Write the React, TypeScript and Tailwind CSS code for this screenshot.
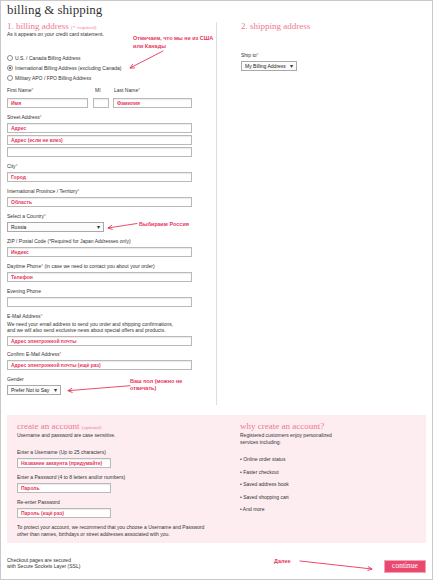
import React from 'react';

function Label({ children, req }: { children: React.ReactNode; req?: boolean }) {
  return (
    <div className="h-[7px] text-[5px] leading-[7px] text-[#333] whitespace-nowrap">
      {children}
      {req && <span className="text-[#e8708a]">*</span>}
    </div>
  );
}

function Input({ w, value }: { w: string; value?: string }) {
  return (
    <div className={`${w} h-[10px] border border-[#b9b9b9] bg-white pl-[3px] text-[5px] leading-[8px] font-bold text-[#e8365d] whitespace-nowrap overflow-hidden shadow-[inset_0_1px_1px_rgba(0,0,0,0.08)]`}>
      {value}
    </div>
  );
}

function Select({ w, value }: { w: string; value: string }) {
  return (
    <div className={`${w} h-[10px] border border-[#a9a9a9] bg-[#fbfbfb] flex items-center justify-between pl-[3px] pr-[3px] text-[5px] leading-[8px] text-[#222] whitespace-nowrap`}>
      <span>{value}</span>
      <span className="text-[6px] leading-[6px] text-[#333]">▾</span>
    </div>
  );
}

function Radio({ checked, children }: { checked?: boolean; children: React.ReactNode }) {
  return (
    <div className="h-[10px] flex items-center">
      <span className="w-[6px] h-[6px] rounded-full border border-[#8d8d8d] bg-white flex items-center justify-center">
        {checked && <span className="w-[2px] h-[2px] rounded-full bg-[#444]" />}
      </span>
      <span className="ml-[2px] text-[5px] leading-[7px] text-[#333]">{children}</span>
    </div>
  );
}

function Field({ label, req, value }: { label: string; req?: boolean; value?: string }) {
  return (
    <div className="mt-[6px]">
      <Label req={req}>{label}</Label>
      <div className="mt-[2px]">
        <Input w="w-[185px]" value={value} />
      </div>
    </div>
  );
}

export default function App() {
  return (
    <div className="relative w-[433px] h-[580px] border border-[#c9c9c9] bg-white overflow-hidden font-['Liberation_Sans',Arial,sans-serif] text-[#333]">
      <div className="h-[21px] pl-[6px] text-[13px] leading-[16px] pt-[1px] font-['Liberation_Serif',serif] text-[#333]">
        billing &amp; shipping
      </div>

      <div className="flex">
        {/* left column */}
        <div className="w-[216px] border-r border-[#dedede] pl-[6px] pb-[10px]">
          <div className="h-[9px] text-[9px] leading-[9px] font-['Liberation_Serif',serif] text-[#ee7890] whitespace-nowrap">
            1. billing address <span className="text-[5px]">(*=required)</span>
          </div>
          <div className="h-[7px] text-[5px] leading-[7px]">As it appears on your credit card statement.</div>

          <div className="mt-[15px]">
            <Radio>U.S. / Canada Billing Address</Radio>
            <Radio checked>International Billing Address (excluding Canada)</Radio>
            <Radio>Military APO / FPO Billing Address</Radio>
          </div>

          <div className="mt-[4px] flex">
            <div className="w-[85.5px]">
              <Label req>First Name</Label>
              <div className="mt-[4px]">
                <Input w="w-[81px]" value="Имя" />
              </div>
            </div>
            <div className="w-[20.5px]">
              <div className="pl-[2.5px]">
                <Label>MI</Label>
              </div>
              <div className="mt-[4px]">
                <Input w="w-[16px]" />
              </div>
            </div>
            <div>
              <div className="pl-[1px]">
                <Label req>Last Name</Label>
              </div>
              <div className="mt-[4px]">
                <Input w="w-[79px]" value="Фамилия" />
              </div>
            </div>
          </div>

          <div className="mt-[5.5px]">
            <Label req>Street Address</Label>
            <div className="mt-[2.5px] flex flex-col gap-[2px]">
              <Input w="w-[185px]" value="Адрес" />
              <Input w="w-[185px]" value="Адрес (если не влез)" />
              <Input w="w-[185px]" />
            </div>
          </div>

          <Field label="City" req value="Город" />
          <Field label="International Province / Territory" req value="Область" />

          <div className="mt-[6px]">
            <Label req>Select a Country</Label>
            <div className="mt-[2px]">
              <Select w="w-[97px]" value="Russia" />
            </div>
          </div>

          <div className="mt-[5.5px]">
            <Label>ZIP / Postal Code (*Required for Japan Addresses only)</Label>
            <div className="mt-[2px]">
              <Input w="w-[185px]" value="Индекс" />
            </div>
          </div>

          <div className="mt-[6px]">
            <div className="h-[7px] text-[5px] leading-[7px] whitespace-nowrap">
              Daytime Phone<span className="text-[#e8708a]">*</span> (in case we need to contact you about your order)
            </div>
            <div className="mt-[2px]">
              <Input w="w-[185px]" value="Телефон" />
            </div>
          </div>

          <Field label="Evening Phone" />

          <div className="mt-[6px]">
            <Label req>E-Mail Address</Label>
            <div className="mt-[1px] text-[5px] leading-[6.5px]">
              We need your email address to send you order and shipping confirmations,
              <br />
              and we will also send exclusive news about special offers and products.
            </div>
            <div className="mt-[2px]">
              <Input w="w-[185px]" value="Адрес электронной почты" />
            </div>
          </div>

          <div className="mt-[5px]">
            <Label req>Confirm E-Mail Address</Label>
            <div className="mt-[2px]">
              <Input w="w-[185px]" value="Адрес электронной почты (ещё раз)" />
            </div>
          </div>

          <div className="mt-[6px]">
            <Label>Gender</Label>
            <div className="mt-[2px]">
              <Select w="w-[54px]" value="Prefer Not to Say" />
            </div>
          </div>
        </div>

        {/* right column */}
        <div className="pl-[24px]">
          <div className="h-[9px] text-[9px] leading-[9px] font-['Liberation_Serif',serif] text-[#ee7890] whitespace-nowrap">
            2. shipping address
          </div>
          <div className="mt-[20.5px]">
            <Label req>Ship to</Label>
            <div className="mt-[2px]">
              <Select w="w-[56px]" value="My Billing Address" />
            </div>
          </div>
        </div>
      </div>

      {/* account box */}
      <div className="mt-[10px] ml-[6px] w-[419px] h-[128px] bg-[#fdedf0] flex">
        <div className="w-[233px] pl-[10px] pt-[7px]">
          <div className="h-[9px] text-[9px] leading-[9px] font-['Liberation_Serif',serif] text-[#ee7890] whitespace-nowrap">
            create an account <span className="text-[5px]">(optional)</span>
          </div>
          <div className="mt-[1px] h-[7px] text-[5px] leading-[7px]">Username and password are case sensitive.</div>

          <div className="mt-[10px]">
            <Label>Enter a Username (Up to 25 characters)</Label>
            <div className="mt-[2px]">
              <Input w="w-[94px]" value="Название аккаунта (придумайте)" />
            </div>
          </div>
          <div className="mt-[6px]">
            <Label>Enter a Password (4 to 8 letters and/or numbers)</Label>
            <div className="mt-[2px]">
              <Input w="w-[94px]" value="Пароль" />
            </div>
          </div>
          <div className="mt-[6px]">
            <Label>Re-enter Password</Label>
            <div className="mt-[2px]">
              <Input w="w-[94px]" value="Пароль (ещё раз)" />
            </div>
          </div>
          <div className="mt-[6px] text-[5px] leading-[7px] whitespace-nowrap">
            To protect your account, we recommend that you choose a Username and Password
            <br />
            other than names, birthdays or street addresses associated with you.
          </div>
        </div>

        <div className="pt-[7px]">
          <div className="h-[9px] text-[9px] leading-[9px] font-['Liberation_Serif',serif] text-[#ee7890] whitespace-nowrap">
            why create an account?
          </div>
          <div className="mt-[1px] text-[5px] leading-[7px]">
            Registered customers enjoy personalized
            <br />
            services including:
          </div>
          <ul className="mt-[7.5px] text-[5px] leading-[12.5px]">
            <li>• Online order status</li>
            <li>• Faster checkout</li>
            <li>• Saved address book</li>
            <li>• Saved shopping cart</li>
            <li>• And more</li>
          </ul>
        </div>
      </div>

      {/* footer */}
      <div className="mt-[14px] pl-[6px] pr-[6px] flex justify-between items-start">
        <div className="text-[5px] leading-[6.6px]">
          Checkout pages are secured
          <br />
          with Secure Sockets Layer (SSL)
        </div>
        <div className="mt-[3px] w-[42px] h-[13px] bg-[#e9496e] border border-[#f7a3b5] flex items-center justify-center text-[7.5px] leading-[8px] text-white font-['Liberation_Serif',serif]">
          continue
        </div>
      </div>

      {/* annotations */}
      <div className="absolute left-[132px] top-[33px] text-[5.5px] leading-[8px] font-bold text-[#e8365d] whitespace-nowrap">
        Отмечаем, что мы не из США
        <br />
        или Канады
      </div>
      <div className="absolute left-[138px] top-[219.5px] text-[5.5px] leading-[7px] font-bold text-[#e8365d] whitespace-nowrap">
        Выбираем Россия
      </div>
      <div className="absolute left-[129px] top-[377px] text-[5.5px] leading-[7.3px] font-bold text-[#e8365d] whitespace-nowrap">
        Ваш пол (можно не
        <br />
        отвечать)
      </div>
      <div className="absolute left-[273px] top-[557px] text-[5.5px] leading-[7px] font-bold text-[#e8365d] whitespace-nowrap">
        Далее
      </div>

      <svg className="absolute left-[-1px] top-[-1px] pointer-events-none" width="434" height="581" viewBox="0 0 434 581" fill="none" stroke="#e8365d" strokeWidth="0.9" strokeLinecap="round" strokeLinejoin="round">
        <line x1="163" y1="51" x2="130" y2="68" />
        <polyline points="132.6,64.4 130,68 134.5,67.9" />
        <line x1="137" y1="223.5" x2="108" y2="228" />
        <polyline points="111.6,225.4 108,228 112.3,229.4" />
        <line x1="130" y1="385.7" x2="68" y2="390.7" />
        <polyline points="71.8,388.4 68,390.7 72.2,392.4" />
        <line x1="300" y1="561" x2="372" y2="569" />
        <polyline points="368.2,566.6 372,569 367.8,570.5" />
      </svg>
    </div>
  );
}
